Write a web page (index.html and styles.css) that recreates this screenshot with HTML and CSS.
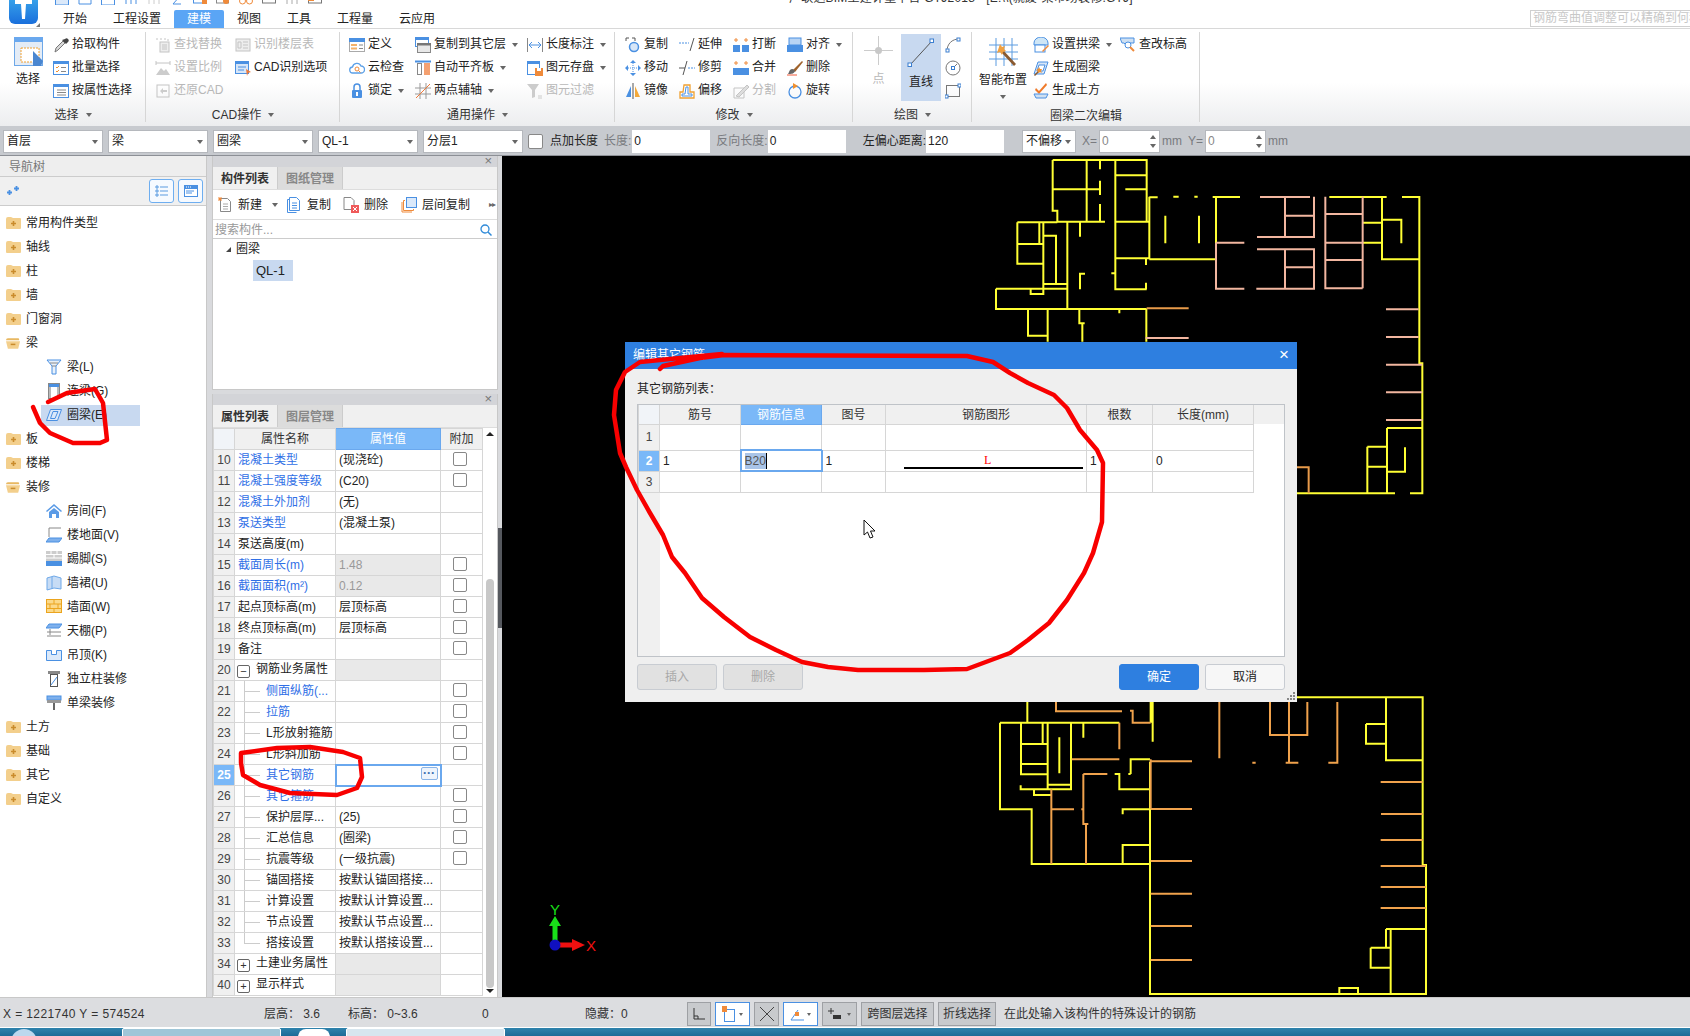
FILE: index.html
```html
<!DOCTYPE html>
<html lang="zh-CN">
<head>
<meta charset="utf-8">
<title>广联达BIM土建计量平台 GTJ2018</title>
<link rel="stylesheet" href="styles.css">
</head>
<body>
<svg class="defs" aria-hidden="true">
  <symbol id="pick" viewBox="0 0 16 16"><path d="M2 15l1-4 7-7 2 2-7 7z" fill="#d8d8d8" stroke="#777"/><path d="M9 3l4 4 2-2a2 2 0 0 0-3-3z" fill="#444"/></symbol>
  <symbol id="wcheck" viewBox="0 0 16 16"><rect x=".5" y="1.5" width="15" height="13" fill="#fff" stroke="#4a90e2"/><rect y="1" width="16" height="3" fill="#4a90e2"/><path d="M3 7l1 1 2-2M3 11l1 1 2-2" stroke="#f09030" fill="none"/><path d="M8 7.5h5M8 11.5h5" stroke="#888"/></symbol>
  <symbol id="wlist" viewBox="0 0 16 16"><rect x=".5" y="1.5" width="15" height="13" fill="#fff" stroke="#4a90e2"/><rect y="1" width="16" height="3" fill="#4a90e2"/><path d="M4 7h9M4 9.5h9M4 12h9" stroke="#888"/></symbol>
  <symbol id="gfind" viewBox="0 0 16 16"><rect x="5" y="5" width="9" height="10" fill="#eee" stroke="#c4c4c4"/><path d="M1 2h2M5 2h2M9 2h2M13 2v2M7 8h5M7 10h5M7 12h5" stroke="#c4c4c4"/></symbol>
  <symbol id="gfloor" viewBox="0 0 16 16"><rect x="1" y="2" width="14" height="12" fill="#eee" stroke="#c4c4c4"/><path d="M8 5h5M8 8h5M8 11h5M3 5h3v6H3z" stroke="#c4c4c4" fill="none"/></symbol>
  <symbol id="gscale" viewBox="0 0 16 16"><path d="M1 3h14M1 1v4M15 1v4" stroke="#c4c4c4" fill="none"/><path d="M1 15l5-7 3 3 2-2 4 6z" fill="#ccc"/></symbol>
  <symbol id="cadopt" viewBox="0 0 16 16"><rect x=".5" y="1.5" width="13" height="12" fill="#d7e6f8" stroke="#4a90e2"/><rect y="1" width="14" height="3" fill="#4a90e2"/><path d="M3 7h8M3 10h6" stroke="#4a90e2"/><path d="M11 9l5 3-3 1-1 3z" fill="#ef7a3a"/></symbol>
  <symbol id="grestore" viewBox="0 0 16 16"><rect x="2" y="2" width="12" height="12" fill="none" stroke="#c4c4c4"/><path d="M5 8l3-3v2h4v2H8v2z" fill="#ccc"/></symbol>
  <symbol id="define" viewBox="0 0 16 16"><rect x=".5" y="1.5" width="15" height="13" fill="#fff" stroke="#aaa"/><rect y="1" width="16" height="4" fill="#4a90e2"/><rect x="2" y="7" width="6" height="2" fill="#f4b26a"/><rect x="2" y="10.500" width="6" height="2" fill="#f4b26a"/><path d="M10 8h4M10 11.500h4" stroke="#888"/></symbol>
  <symbol id="cloud" viewBox="0 0 16 16"><path d="M4 13a3 3 0 0 1-.5-6A4.500 4.500 0 0 1 12 6a3.500 3.500 0 0 1 0 7z" fill="#fff" stroke="#5ba0e8" stroke-width="1.300"/><circle cx="8" cy="9" r="2" fill="none" stroke="#ef8a3a"/><path d="M9.500 10.500l2 2" stroke="#ef8a3a"/></symbol>
  <symbol id="lock" viewBox="0 0 16 16"><path d="M5 7V4a3 3 0 0 1 6 0v3" fill="none" stroke="#4a90e2" stroke-width="1.500"/><rect x="3" y="7" width="10" height="8" rx="1" fill="#4a90e2"/><rect x="7" y="9" width="2" height="4" fill="#fff"/></symbol>
  <symbol id="copyfl" viewBox="0 0 16 16"><rect x=".5" y=".5" width="13" height="9" fill="#fff" stroke="#4a90e2"/><rect width="14" height="3" fill="#4a90e2"/><rect x="2.500" y="6.500" width="13" height="9" fill="#e8e8e8" stroke="#888"/><rect x="2" y="6" width="14" height="2.500" fill="#777"/></symbol>
  <symbol id="autofl" viewBox="0 0 16 16"><path d="M0 1.500h16" stroke="#4a90e2" stroke-width="2"/><rect x="2.500" y="3.500" width="4" height="11" fill="#fff" stroke="#888"/><rect x="9" y="3" width="6" height="12" fill="#f4a070"/></symbol>
  <symbol id="axis" viewBox="0 0 16 16"><path d="M0 5h16M0 11h16M5 0v16M11 0v16" stroke="#999" fill="none"/><path d="M1 15L15 1" stroke="#ef7a3a"/></symbol>
  <symbol id="dimen" viewBox="0 0 16 16"><path d="M.5 1v14M15.500 1v14" stroke="#888"/><path d="M2 8h12M2 8l3-3M2 8l3 3M14 8l-3-3M14 8l-3 3" stroke="#4a90e2" fill="none"/></symbol>
  <symbol id="store" viewBox="0 0 16 16"><rect x=".5" y="1.500" width="12" height="13" fill="#fff" stroke="#4a90e2"/><rect y="1" width="13" height="3" fill="#4a90e2"/><rect x="8" y="8" width="8" height="8" fill="#ef8a3a"/><rect x="10" y="8" width="4" height="3" fill="#fff"/></symbol>
  <symbol id="gfilter" viewBox="0 0 16 16"><path d="M0 1h12L8 7v7L5 15V7z" fill="#ccc"/><path d="M11 13h4M11 15h4" stroke="#ccc"/></symbol>
  <symbol id="mcopy" viewBox="0 0 16 16"><path d="M1 1h3M7 1h3v3M1 1v3" stroke="#555" fill="none"/><circle cx="9" cy="10" r="4.500" fill="#d7e6f8" stroke="#4a90e2" stroke-width="1.500"/></symbol>
  <symbol id="mmove" viewBox="0 0 16 16"><path d="M8 0l3 3H5zM8 16l-3-3h6zM0 8l3-3v6zM16 8l-3 3V5z" fill="#4a90e2"/><path d="M8 3v10M3 8h10" stroke="#4a90e2" stroke-dasharray="1 1"/></symbol>
  <symbol id="mmirror" viewBox="0 0 16 16"><path d="M1 14l5-11v11z" fill="#4a90e2"/><path d="M8 0v16" stroke="#555"/><path d="M10 3l5 11h-5z" fill="#f4a93a"/></symbol>
  <symbol id="mext" viewBox="0 0 16 16"><path d="M0 6h10" stroke="#4a90e2" stroke-dasharray="2 1"/><path d="M11 14l4-13" stroke="#555"/></symbol>
  <symbol id="mtrim" viewBox="0 0 16 16"><path d="M0 8h6" stroke="#555"/><path d="M9 8h7" stroke="#4a90e2" stroke-dasharray="2 1"/><path d="M4 15L8 1" stroke="#555"/></symbol>
  <symbol id="moff" viewBox="0 0 16 16"><path d="M1 15V9h3l1-7h6v7h4v6z" fill="#fff" stroke="#f0a030" stroke-width="1.300"/><path d="M3 13V11h3l1-7h2v7h4v2z" fill="none" stroke="#4a90e2"/></symbol>
  <symbol id="gsplit" viewBox="0 0 16 16"><path d="M1 5h10v10H1z" fill="none" stroke="#c4c4c4"/><path d="M3 13L14 2l2 2L6 14z" fill="#ddd" stroke="#c4c4c4"/></symbol>
  <symbol id="mbreak" viewBox="0 0 16 16"><path d="M3 1v4M13 1v4M1 3h4M11 3h4" stroke="#ef8a3a"/><rect y="8" width="7" height="7" fill="#4a90e2"/><rect x="9" y="8" width="7" height="7" fill="#4a90e2"/></symbol>
  <symbol id="mmerge" viewBox="0 0 16 16"><path d="M3 1v4M13 1v4M1 3h4M11 3h4" stroke="#ef8a3a"/><rect y="8" width="16" height="7" fill="#4a90e2"/></symbol>
  <symbol id="malign" viewBox="0 0 16 16"><rect x="2" y="1" width="12" height="7" fill="#b8d4f4" stroke="#4a90e2"/><rect y="8" width="16" height="7" fill="#4a90e2"/></symbol>
  <symbol id="mdel" viewBox="0 0 16 16"><path d="M6 10L15 1l1 1-8 10z" fill="#a0622a"/><path d="M3 10c2-2 4-1 5 1-1 3-4 3-7 3 1-1 1-3 2-4z" fill="#666"/><path d="M0 15h10" stroke="#ef5a3a"/></symbol>
  <symbol id="mrot" viewBox="0 0 16 16"><circle cx="8" cy="9" r="6" fill="none" stroke="#4a90e2" stroke-width="1.300"/><path d="M6 0l5 3-5 3z" fill="#f09030"/></symbol>
  <symbol id="dpoint" viewBox="0 0 29 29"><path d="M14.500 0v12M14.500 17v12M0 14.500h12M17 14.500h12" stroke="#ccc"/><circle cx="14.500" cy="14.500" r="3.500" fill="#c8c8c8"/></symbol>
  <symbol id="dline" viewBox="0 0 28 30"><path d="M3 27L25 3" stroke="#555"/><rect x="1" y="25" width="3.500" height="3.500" fill="#fff" stroke="#3b7fd0"/><rect x="23" y="1" width="3.500" height="3.500" fill="#fff" stroke="#3b7fd0"/></symbol>
  <symbol id="darc" viewBox="0 0 16 16"><path d="M2 14C2 7 7 2 14 2" fill="none" stroke="#777"/><rect x="1" y="12" width="3" height="3" fill="#fff" stroke="#3b7fd0"/><rect x="12" y="1" width="3" height="3" fill="#fff" stroke="#3b7fd0"/></symbol>
  <symbol id="dcirc" viewBox="0 0 16 16"><circle cx="8" cy="8" r="7" fill="none" stroke="#777"/><path d="M8 8l4-4" stroke="#777"/><rect x="6.500" y="6.500" width="3" height="3" fill="#fff" stroke="#3b7fd0"/></symbol>
  <symbol id="drect" viewBox="0 0 16 16"><rect x="1.500" y="2.500" width="13" height="11" fill="none" stroke="#777"/><rect x="0" y="12" width="3" height="3" fill="#fff" stroke="#3b7fd0"/><rect x="13" y="1" width="3" height="3" fill="#fff" stroke="#3b7fd0"/></symbol>
  <symbol id="smart" viewBox="0 0 31 29"><path d="M1 7h29M1 14h29M1 21h29M8 0v28M16 0v28M24 0v28" stroke="#5a9be0"/><path d="M15 12l13 14-2 2L13 14z" fill="#8a5a30"/><path d="M12 6l2 3 3-1-1 3 2 2-3 1-1 3-2-3-3 1 1-3z" fill="#f0a040"/></symbol>
  <symbol id="arch" viewBox="0 0 16 16"><path d="M1 6a7 6 0 0 1 14 0v2H1z" fill="#cfe6f6" stroke="#4a90e2"/><rect x="2" y="8" width="10" height="7" fill="#fff" stroke="#4a90e2"/><path d="M9 14l6-6 1 1-6 6z" fill="#ef8a3a"/></symbol>
  <symbol id="genring" viewBox="0 0 16 16"><path d="M5 2h10l-4 12H1z" fill="#d7e6f8" stroke="#4a90e2"/><path d="M6 5h6l-2 6H4z" fill="#fff" stroke="#4a90e2"/><path d="M1 15l5-5 1 1-5 5z" fill="#8a5a30"/><path d="M6 7l1 2 2 0-1 2 1 2-2-1-2 1 0-2-2-1 2-1z" fill="#f09030"/></symbol>
  <symbol id="genearth" viewBox="0 0 16 16"><path d="M3 5l3 3 7-8 1 2-8 9-4-4z" fill="#ef7a2a"/><path d="M1 11h14l-2 4H3z" fill="#cfe0f2" stroke="#4a90e2"/></symbol>
  <symbol id="chk" viewBox="0 0 16 16"><path d="M0 1h14v5H8v4L4 6H2z" fill="#cfe0f2" stroke="#4a90e2"/><circle cx="8" cy="8" r="3" fill="#fff" stroke="#4a90e2"/><path d="M10 10l4 4" stroke="#ef8a3a" stroke-width="2"/></symbol>
  <symbol id="fold" viewBox="0 0 15 12"><path d="M0 2q0-2 2-2h3l2 1h7q1 0 1 1v9q0 1-1 1H1q-1 0-1-1z" fill="#f3cf8c"/><path d="M7.500 4v5M5 6.500h5" stroke="#c98b2c" stroke-width="1.600"/></symbol>
  <symbol id="foldo" viewBox="0 0 16 12"><path d="M0 3q0-2 2-2h11q1 0 1 1v1H3z" fill="#e8b862"/><path d="M0 4h15l-2 8H2z" fill="#f3cf8c"/><path d="M5 7.500h5" stroke="#c98b2c" stroke-width="1.600"/></symbol>
  <symbol id="n1" viewBox="0 0 16 16"><path d="M1 1h14l-5 6v8H6V7z" fill="#e8f1fb" stroke="#4a90e2"/><path d="M4 4h8M6 7h4" stroke="#888"/></symbol>
  <symbol id="n2" viewBox="0 0 16 16"><rect x="2.500" y=".5" width="11" height="15" fill="#fff" stroke="#888"/><rect x="3" y="1" width="10" height="3" fill="#4a90e2"/><path d="M4 4v12M12 4v12" stroke="#777"/></symbol>
  <symbol id="n3" viewBox="0 0 16 16"><path d="M4.500 2.500h11l-4 11h-11z" fill="#dbe9fa" stroke="#4a90e2"/><path d="M7 4.500h5l-3 7H4.500z" fill="none" stroke="#4a90e2"/></symbol>
  <symbol id="nhouse" viewBox="0 0 16 16"><path d="M8 1L0 8l1 1 7-6 7 6 1-1z" fill="#5b9be6"/><path d="M3 9l5-4 5 4v6h-3v-4H6v4H3z" fill="#5b9be6"/></symbol>
  <symbol id="nfloor" viewBox="0 0 16 16"><path d="M3 10V1h12" fill="none" stroke="#888"/><path d="M3 11h13l-3 4H0z" fill="#7eb0ec" stroke="#4a90e2"/></symbol>
  <symbol id="nskirt" viewBox="0 0 16 16"><rect width="16" height="11" fill="#ccc"/><path d="M0 3.500h16M0 7h16M5 0v3.500M11 0v3.500M8 3.500V7" stroke="#fff"/><rect y="10" width="16" height="5" fill="#4a90e2"/></symbol>
  <symbol id="nwains" viewBox="0 0 16 16"><path d="M1 3l7-2 7 2v11l-7-1-7 2z" fill="#c7dcf5" stroke="#6ea8e8"/><path d="M6 2v12" stroke="#6ea8e8"/></symbol>
  <symbol id="nwall" viewBox="0 0 16 16"><rect x=".5" y=".5" width="15" height="13" fill="#fbd98a" stroke="#eba41e"/><path d="M0 5h16M0 9.500h16M8 0v5M4 5v4.500M12 5v4.500M8 9.500V14" stroke="#eba41e"/></symbol>
  <symbol id="nceil" viewBox="0 0 16 16"><path d="M3 1h13l-3 4H0z" fill="#7eb0ec" stroke="#4a90e2"/><path d="M4 6v6M1 9h14M1 13h14" stroke="#888" fill="none"/></symbol>
  <symbol id="nhang" viewBox="0 0 16 16"><path d="M.5 3.500h5v4h5v-4h5v10H.5z" fill="#dbe9fa" stroke="#4a90e2"/></symbol>
  <symbol id="npillar" viewBox="0 0 16 16"><rect x="2" y="0" width="12" height="3" fill="#888"/><rect x="4.500" y="3.500" width="7" height="12" fill="#fff" stroke="#555"/><path d="M5 14l6-8" stroke="#4a90e2"/></symbol>
  <symbol id="nroll" viewBox="0 0 16 16"><rect x="1" y="1" width="14" height="4" fill="#7eb0ec" stroke="#4a90e2"/><rect x="1" y="5" width="14" height="3" fill="#999"/><path d="M8 8v7" stroke="#666" stroke-width="2"/></symbol>
  <symbol id="tnew" viewBox="0 0 14 16"><path d="M2.500 1.500h7l3 3v10h-10z" fill="#fff" stroke="#888"/><path d="M5 7h5M5 9.500h5M5 12h5" stroke="#aaa"/><path d="M2 0v4M0 2h4M.5.500l3 3M3.500.500l-3 3" stroke="#ef8a3a"/></symbol>
  <symbol id="tcopy" viewBox="0 0 14 16"><path d="M.5 2.500h2M.5 2.500v13h9" fill="none" stroke="#4a90e2"/><path d="M2.500 .5h7l3 3v10h-10z" fill="#fff" stroke="#4a90e2"/><path d="M5 6h5M5 8.500h5M5 11h5" stroke="#4a90e2"/></symbol>
  <symbol id="tdel" viewBox="0 0 16 16"><path d="M1 .5h7l3 3v9H1z" fill="#fff" stroke="#888"/><rect x="8" y="8" width="8" height="8" fill="#ef5a5a"/><path d="M10 10l4 4M14 10l-4 4" stroke="#fff"/></symbol>
  <symbol id="tfl" viewBox="0 0 16 16"><rect x="5.500" y=".5" width="10" height="10" fill="#dbe9fa" stroke="#4a90e2"/><path d="M4 3.500H2.500v10h10V12M1 5v10h10" fill="none" stroke="#ef8a3a"/></symbol>
  <symbol id="search" viewBox="0 0 12 12"><circle cx="5" cy="5" r="4" fill="none" stroke="#2f8ad8" stroke-width="1.300"/><path d="M8 8l3.500 3.500" stroke="#2f8ad8" stroke-width="1.500"/></symbol>
  <symbol id="navlist" viewBox="0 0 14 14"><path d="M1 2h2v2H1zM1 6h2v2H1zM1 10h2v2H1z" fill="none" stroke="#5a9be0"/><path d="M5 3h8M5 7h8M5 11h8" stroke="#5a9be0"/></symbol>
  <symbol id="navwin" viewBox="0 0 14 14"><rect x=".5" y="1.500" width="13" height="11" fill="#fff" stroke="#4a90e2"/><rect y="1" width="14" height="4" fill="#4a90e2"/><path d="M2 3h1M4 3h1M6 3h1" stroke="#fff"/><path d="M2 7h8M2 9h6" stroke="#4a90e2"/></symbol>
  <symbol id="plus2" viewBox="0 0 12 10"><path d="M7 2.500h5M9.500 0v5" stroke="#4a90e2" stroke-width="1.800"/><path d="M0 6.500h5M2.500 4v5" stroke="#4a90e2" stroke-width="1.800"/></symbol>
</svg>

<header class="topbar">
  <div class="logo">
    <svg width="46" height="28" viewBox="0 0 46 28"><defs><linearGradient id="lg" x1="0" y1="0" x2="0" y2="1"><stop offset="0" stop-color="#3fb0ee"/><stop offset="1" stop-color="#1a6fdc"/></linearGradient></defs><rect x="9" y="-8" width="29" height="32" rx="6" fill="url(#lg)"/><path d="M15 0h17v4h-6l-1 15h-3l-1-15h-6z" fill="#fff"/><path d="M40 23v4h-4z" fill="#777"/></svg>
  </div>
  <div class="topright">
    <div class="qat">
      <svg class="q"><rect x=".5" y="1" width="13" height="13" fill="#dbe9fa" stroke="#4a90e2"/></svg>
      <svg class="q"><path d="M1 1v12h12V6l-5-5z" fill="none" stroke="#4a90e2"/></svg>
      <svg class="q"><rect x=".5" y="1" width="13" height="13" fill="none" stroke="#4a90e2"/></svg>
      <svg class="q"><path d="M2 0v13M7 0v13M12 0v13" stroke="#4a90e2"/></svg>
      <svg class="q"><path d="M2 0v13M7 0v13M12 0v13" stroke="#ccc"/></svg>
      <svg class="q"><path d="M3 4h8l-8 9h8" fill="none" stroke="#4a90e2"/></svg>
      <svg class="q"><rect x=".5" y="1" width="12" height="11" fill="#fff" stroke="#4a90e2"/><rect x="9" y="8" width="5" height="5" fill="#ef8a3a"/></svg>
      <svg class="q"><rect x=".5" y="1" width="12" height="11" fill="#fff" stroke="#888"/><circle cx="10" cy="10" r="3" fill="#ef8a3a"/></svg>
      <svg class="q"><circle cx="3.500" cy="10" r="3" fill="none" stroke="#ef8a3a"/><circle cx="10.500" cy="10" r="3" fill="none" stroke="#ef8a3a"/></svg>
      <svg class="q"><rect x=".5" y="1" width="13" height="11" fill="#fff" stroke="#777"/></svg>
      <svg class="q"><path d="M2 0v13M7 0v13M12 0v13" stroke="#aaa"/></svg>
      <svg class="q"><rect x=".5" y="1" width="13" height="11" fill="#fff" stroke="#777"/><rect y="4" width="6" height="6" fill="#ef8a3a"/></svg>
    </div>
    <div class="apptitle">广联达BIM土建计量平台 GTJ2018 - [E:\\(就废·某市场装修.GTJ]</div>
    <nav class="tabs">
      <span class="tab">开始</span><span class="tab">工程设置</span><span class="tab on">建模</span><span class="tab">视图</span><span class="tab">工具</span><span class="tab">工程量</span><span class="tab">云应用</span>
      <span class="helpbox">钢筋弯曲值调整可以精确到何种程度</span>
    </nav>
  </div>
</header>

<section class="ribbon">
  <div class="group g1">
    <div class="gbody">
      <div class="big b1"><svg width="29" height="29" viewBox="0 0 29 29"><rect x=".5" y=".5" width="28" height="28" fill="#e4ecf6" stroke="#6ea8e8"/><rect width="29" height="5" fill="#6aa8ee"/><rect x="7" y="11" width="18" height="14" fill="#fff" stroke="#f0a030" stroke-dasharray="2 1"/><path d="M19 14l10 10-2 5h-8z" fill="#4a86d0"/></svg><span class="biglbl">选择</span></div>
      <div class="col">
        <div class="it"><svg class="ic"><use href="#pick"/></svg>拾取构件</div>
        <div class="it"><svg class="ic"><use href="#wcheck"/></svg>批量选择</div>
        <div class="it"><svg class="ic"><use href="#wlist"/></svg>按属性选择</div>
      </div>
    </div>
    <div class="glabel">选择<i class="dd"></i></div>
  </div>
  <div class="group g2">
    <div class="gbody">
      <div class="col c80">
        <div class="it off"><svg class="ic"><use href="#gfind"/></svg>查找替换</div>
        <div class="it off"><svg class="ic"><use href="#gscale"/></svg>设置比例</div>
        <div class="it off"><svg class="ic"><use href="#grestore"/></svg>还原CAD</div>
      </div>
      <div class="col">
        <div class="it off"><svg class="ic"><use href="#gfloor"/></svg>识别楼层表</div>
        <div class="it"><svg class="ic"><use href="#cadopt"/></svg>CAD识别选项</div>
      </div>
    </div>
    <div class="glabel">CAD操作<i class="dd"></i></div>
  </div>
  <div class="group g3">
    <div class="gbody">
      <div class="col c66">
        <div class="it"><svg class="ic"><use href="#define"/></svg>定义</div>
        <div class="it"><svg class="ic"><use href="#cloud"/></svg>云检查</div>
        <div class="it"><svg class="ic"><use href="#lock"/></svg>锁定<i class="dd"></i></div>
      </div>
      <div class="col c112">
        <div class="it"><svg class="ic"><use href="#copyfl"/></svg>复制到其它层<i class="dd"></i></div>
        <div class="it"><svg class="ic"><use href="#autofl"/></svg>自动平齐板<i class="dd"></i></div>
        <div class="it"><svg class="ic"><use href="#axis"/></svg>两点辅轴<i class="dd"></i></div>
      </div>
      <div class="col">
        <div class="it"><svg class="ic"><use href="#dimen"/></svg>长度标注<i class="dd"></i></div>
        <div class="it"><svg class="ic"><use href="#store"/></svg>图元存盘<i class="dd"></i></div>
        <div class="it off"><svg class="ic"><use href="#gfilter"/></svg>图元过滤</div>
      </div>
    </div>
    <div class="glabel">通用操作<i class="dd"></i></div>
  </div>
  <div class="group g4">
    <div class="gbody">
      <div class="col c54">
        <div class="it"><svg class="ic"><use href="#mcopy"/></svg>复制</div>
        <div class="it"><svg class="ic"><use href="#mmove"/></svg>移动</div>
        <div class="it"><svg class="ic"><use href="#mmirror"/></svg>镜像</div>
      </div>
      <div class="col c54">
        <div class="it"><svg class="ic"><use href="#mext"/></svg>延伸</div>
        <div class="it"><svg class="ic"><use href="#mtrim"/></svg>修剪</div>
        <div class="it"><svg class="ic"><use href="#moff"/></svg>偏移</div>
      </div>
      <div class="col c54">
        <div class="it"><svg class="ic"><use href="#mbreak"/></svg>打断</div>
        <div class="it"><svg class="ic"><use href="#mmerge"/></svg>合并</div>
        <div class="it off"><svg class="ic"><use href="#gsplit"/></svg>分割</div>
      </div>
      <div class="col">
        <div class="it"><svg class="ic"><use href="#malign"/></svg>对齐<i class="dd"></i></div>
        <div class="it"><svg class="ic"><use href="#mdel"/></svg>删除</div>
        <div class="it"><svg class="ic"><use href="#mrot"/></svg>旋转</div>
      </div>
    </div>
    <div class="glabel">修改<i class="dd"></i></div>
  </div>
  <div class="group g5">
    <div class="gbody">
      <div class="big b2"><svg width="29" height="29"><use href="#dpoint"/></svg><span class="biglbl offt">点</span></div>
      <div class="big b3"><svg width="28" height="30"><use href="#dline"/></svg><span class="biglbl">直线</span></div>
      <div class="col">
        <div class="it"><svg class="ic"><use href="#darc"/></svg></div>
        <div class="it"><svg class="ic"><use href="#dcirc"/></svg></div>
        <div class="it"><svg class="ic"><use href="#drect"/></svg></div>
      </div>
    </div>
    <div class="glabel">绘图<i class="dd"></i></div>
  </div>
  <div class="group g6">
    <div class="gbody">
      <div class="big b4"><svg width="31" height="29"><use href="#smart"/></svg><span class="biglbl">智能布置</span><i class="dd"></i></div>
      <div class="col c87">
        <div class="it"><svg class="ic"><use href="#arch"/></svg>设置拱梁<i class="dd"></i></div>
        <div class="it"><svg class="ic"><use href="#genring"/></svg>生成圈梁</div>
        <div class="it"><svg class="ic"><use href="#genearth"/></svg>生成土方</div>
      </div>
      <div class="col">
        <div class="it"><svg class="ic"><use href="#chk"/></svg>查改标高</div>
      </div>
    </div>
    <div class="glabel">圈梁二次编辑</div>
  </div>
</section>

<section class="optbar">
  <span class="sel">首层</span>
  <span class="sel">梁</span>
  <span class="sel">圈梁</span>
  <span class="sel">QL-1</span>
  <span class="sel">分层1</span>
  <span class="cbx"></span>
  <span class="lbl ml7">点加长度</span>
  <span class="lbl ml6 dim">长度:</span><span class="inp w78 gapl">0</span>
  <span class="lbl ml6 dim">反向长度:</span><span class="inp w78">0</span>
  <span class="lbl ml17">左偏心距离:</span><span class="inp w78">120</span>
  <span class="sel short">不偏移</span>
  <span class="lbl ml6 dim">X=</span><span class="inp spin w61 dim gapl2">0</span>
  <span class="lbl dim gapl1">mm</span>
  <span class="lbl ml6 dim">Y=</span><span class="inp spin w61 dim gapl2">0</span>
  <span class="lbl dim gapl1">mm</span>
</section>

<main class="work">
  <aside class="nav">
    <div class="navhead">导航树</div>
    <div class="navtool">
      <svg class="plus" width="12" height="10"><use href="#plus2"/></svg>
      <span class="navbtn"><svg width="14" height="14"><use href="#navlist"/></svg></span>
      <span class="navbtn"><svg width="14" height="14"><use href="#navwin"/></svg></span>
    </div>
    <ul class="tree">
      <li><svg class="fo"><use href="#fold"/></svg>常用构件类型</li>
      <li><svg class="fo"><use href="#fold"/></svg>轴线</li>
      <li><svg class="fo"><use href="#fold"/></svg>柱</li>
      <li><svg class="fo"><use href="#fold"/></svg>墙</li>
      <li><svg class="fo"><use href="#fold"/></svg>门窗洞</li>
      <li><svg class="fo"><use href="#foldo"/></svg>梁</li>
      <li class="sub"><span><svg class="ic"><use href="#n1"/></svg>梁(L)</span></li>
      <li class="sub"><span><svg class="ic"><use href="#n2"/></svg>连梁(G)</span></li>
      <li class="sub cur"><span><svg class="ic"><use href="#n3"/></svg>圈梁(E)</span></li>
      <li><svg class="fo"><use href="#fold"/></svg>板</li>
      <li><svg class="fo"><use href="#fold"/></svg>楼梯</li>
      <li><svg class="fo"><use href="#foldo"/></svg>装修</li>
      <li class="sub"><span><svg class="ic"><use href="#nhouse"/></svg>房间(F)</span></li>
      <li class="sub"><span><svg class="ic"><use href="#nfloor"/></svg>楼地面(V)</span></li>
      <li class="sub"><span><svg class="ic"><use href="#nskirt"/></svg>踢脚(S)</span></li>
      <li class="sub"><span><svg class="ic"><use href="#nwains"/></svg>墙裙(U)</span></li>
      <li class="sub"><span><svg class="ic"><use href="#nwall"/></svg>墙面(W)</span></li>
      <li class="sub"><span><svg class="ic"><use href="#nceil"/></svg>天棚(P)</span></li>
      <li class="sub"><span><svg class="ic"><use href="#nhang"/></svg>吊顶(K)</span></li>
      <li class="sub"><span><svg class="ic"><use href="#npillar"/></svg>独立柱装修</span></li>
      <li class="sub"><span><svg class="ic"><use href="#nroll"/></svg>单梁装修</span></li>
      <li><svg class="fo"><use href="#fold"/></svg>土方</li>
      <li><svg class="fo"><use href="#fold"/></svg>基础</li>
      <li><svg class="fo"><use href="#fold"/></svg>其它</li>
      <li><svg class="fo"><use href="#fold"/></svg>自定义</li>
    </ul>
  </aside>

  <div class="panels">
    <section class="panel p1">
      <div class="phead">×</div>
      <div class="ptabs"><span class="ptab on">构件列表</span><span class="ptab">图纸管理</span></div>
      <div class="ptool">
        <span class="pt t1"><svg class="ic"><use href="#tnew"/></svg>新建<i class="dd"></i></span>
        <span class="pt t2"><svg class="ic"><use href="#tcopy"/></svg>复制</span>
        <span class="pt t3"><svg class="ic"><use href="#tdel"/></svg>删除</span>
        <span class="pt t4"><svg class="ic"><use href="#tfl"/></svg>层间复制</span>
        <span class="more">▸▸</span>
      </div>
      <div class="psearch"><span>搜索构件...</span><svg width="12" height="12"><use href="#search"/></svg></div>
      <div class="ptree">
        <div class="node"><i class="tri"></i>圈梁</div>
        <div class="leaf"><span>QL-1</span></div>
      </div>
    </section>

    <section class="panel p2">
      <div class="phead">×</div>
      <div class="ptabs"><span class="ptab on">属性列表</span><span class="ptab">图层管理</span></div>
      <div class="propwrap">
        <table class="props">
          <colgroup><col class="c-n"><col class="c-name"><col class="c-val"><col class="c-add"></colgroup>
          <thead><tr><th class="blank"></th><th>属性名称</th><th class="hl">属性值</th><th>附加</th></tr></thead>
          <tbody>
            <tr><td class="n">10</td><td class="lk">混凝土类型</td><td>(现浇砼)</td><td class="a"><i class="cb"></i></td></tr>
            <tr><td class="n">11</td><td class="lk">混凝土强度等级</td><td>(C20)</td><td class="a"><i class="cb"></i></td></tr>
            <tr><td class="n">12</td><td class="lk">混凝土外加剂</td><td>(无)</td><td class="a"></td></tr>
            <tr><td class="n">13</td><td class="lk">泵送类型</td><td>(混凝土泵)</td><td class="a"></td></tr>
            <tr><td class="n">14</td><td>泵送高度(m)</td><td></td><td class="a"></td></tr>
            <tr><td class="n">15</td><td class="lk">截面周长(m)</td><td class="ro">1.48</td><td class="a"><i class="cb"></i></td></tr>
            <tr><td class="n">16</td><td class="lk">截面面积(m²)</td><td class="ro">0.12</td><td class="a"><i class="cb"></i></td></tr>
            <tr><td class="n">17</td><td>起点顶标高(m)</td><td>层顶标高</td><td class="a"><i class="cb"></i></td></tr>
            <tr><td class="n">18</td><td>终点顶标高(m)</td><td>层顶标高</td><td class="a"><i class="cb"></i></td></tr>
            <tr><td class="n">19</td><td>备注</td><td></td><td class="a"><i class="cb"></i></td></tr>
            <tr><td class="n">20</td><td class="grp"><i class="box">−</i>钢筋业务属性</td><td class="ro"></td><td class="a"></td></tr>
            <tr><td class="n">21</td><td class="ind lk">侧面纵筋(...</td><td></td><td class="a"><i class="cb"></i></td></tr>
            <tr><td class="n">22</td><td class="ind lk">拉筋</td><td></td><td class="a"><i class="cb"></i></td></tr>
            <tr><td class="n">23</td><td class="ind">L形放射箍筋</td><td></td><td class="a"><i class="cb"></i></td></tr>
            <tr><td class="n">24</td><td class="ind">L形斜加筋</td><td></td><td class="a"><i class="cb"></i></td></tr>
            <tr class="act"><td class="n">25</td><td class="ind lk">其它钢筋</td><td class="edit"><span class="dots">···</span></td><td class="a"></td></tr>
            <tr><td class="n">26</td><td class="ind lk">其它箍筋</td><td></td><td class="a"><i class="cb"></i></td></tr>
            <tr><td class="n">27</td><td class="ind">保护层厚...</td><td>(25)</td><td class="a"><i class="cb"></i></td></tr>
            <tr><td class="n">28</td><td class="ind">汇总信息</td><td>(圈梁)</td><td class="a"><i class="cb"></i></td></tr>
            <tr><td class="n">29</td><td class="ind">抗震等级</td><td>(一级抗震)</td><td class="a"><i class="cb"></i></td></tr>
            <tr><td class="n">30</td><td class="ind">锚固搭接</td><td>按默认锚固搭接...</td><td class="a"></td></tr>
            <tr><td class="n">31</td><td class="ind">计算设置</td><td>按默认计算设置...</td><td class="a"></td></tr>
            <tr><td class="n">32</td><td class="ind">节点设置</td><td>按默认节点设置...</td><td class="a"></td></tr>
            <tr><td class="n">33</td><td class="ind last">搭接设置</td><td>按默认搭接设置...</td><td class="a"></td></tr>
            <tr><td class="n">34</td><td class="grp"><i class="box">+</i>土建业务属性</td><td class="ro"></td><td class="a"></td></tr>
            <tr><td class="n">40</td><td class="grp"><i class="box">+</i>显示样式</td><td class="ro"></td><td class="a"></td></tr>
          </tbody>
        </table>
        <div class="vscroll"><i class="up"></i><b></b><i class="down"></i></div>
      </div>
    </section>
  </div>

  <div class="split"><b></b></div>

  <div class="canvas">
    <svg class="plan" width="1188" height="841" viewBox="502 156 1188 841">
      <g transform="translate(980 150) scale(.33333)" fill="none" stroke-width="6">
        <path stroke="#ffff33" d="M218,30H500V215M218,30V182H232V215H375M320,30V215M218,118H358M360,30V58M360,92V135M360,162V215M406,30V418H500M406,76H500M436,118H500M406,215H506M406,325H506M498,328V345M498,398V418M508,328V140M508,142H533M580,140H596M643,140H653M698,141H780M508,328H708V141M556,197V280M657,197V280M112,217H232M112,217V341H190M112,282H190M178,217V280M190,217V416M262,217V477M192,257H228V402M190,402H262M190,416H262M48,416H190M48,416V477H500M152,418V432H190V416M300,217V260M315,371H300V418M394,370H406M144,477V557H203M203,477V575M298,477V520H314M307,520V575M418,477V490M499,477V575"/>
        <path stroke="#ffff33" d="M1048,141H1220M1266,141H1318V640H1327V1030H1290M1206,141V328H1318M1148,218H1206M1148,278H1206M1208,209H1264V280M1221,834H1327M1221,834V1030M1162,890H1221M1162,890V1030M1162,950H1221M1221,965H1275V892M950,1030H1245"/>
        <path stroke="#f2b6a0" d="M708,278H793M708,278V416H793M840,141H990M915,141V262M831,261H1002V140M915,197H1000M831,298H1002V416H829M915,298V416M915,352H1000M1036,140V415H1148M1036,192H1148M1036,278H1148M1036,330H1148M1148,140V415M497,564H626M1218,478H1316M1218,561H1316M1218,644H1327M1218,727H1327M1218,810H1327"/>
        <path stroke="#e79a4a" d="M500,475H626M950,952H986V1030"/>
      </g>
      <g transform="translate(980 690) scale(.33333)" fill="none" stroke-width="6">
        <path stroke="#ffff33" d="M950,22H1328V525H1338V912H510V215M1218,22V211H1328M1158,102H1216M1158,102V161H1216M1218,717H1338M1218,717V773M1232,717V912M1172,773H1232M1172,773V833H1232M1078,912V894H1134V912M142,36V98M60,98H418M60,98V358H155V522H510M123,98V253H202M123,162H202M123,222H202M188,100V162M203,98V298M273,98V298H122V286M203,284H273M238,142V250M310,98V143M162,298V315H215M404,252H418V298H512M518,36V155M512,36V98M452,252V208H510M445,252H452M428,373V358H510M428,522V465H510"/>
        <path stroke="#f0a24c" d="M1202,276H1328M1203,372H1328M1202,450H1328M1202,528H1338M1202,591H1338M1202,654H1338M512,214H636M512,357H636M512,513H636M512,611H636M512,708H636M512,810H636M718,36V205M870,36V135H982V36M927,36V218M917,218H955M817,218H827M1045,218H1072V36M418,98V178M275,208H418M228,36V64H426M450,62H458V98H512M214,298V522M215,358H282M304,358H310M310,252H382M310,252V402H325M318,402V522M512,208V357"/>
      </g>
      <g class="axes">
        <path d="M555 945V925" stroke="#19e019" stroke-width="5"/><path d="M555 916l-6 10h12z" fill="#19e019"/>
        <path d="M555 945H572" stroke="#f01010" stroke-width="5"/><path d="M585 945l-13-6v12z" fill="#f01010"/>
        <circle cx="555" cy="945" r="5.500" fill="#1010c0"/>
        <text x="555" y="915" fill="#19e019" font-size="15" text-anchor="middle" font-family="Liberation Sans">Y</text>
        <text x="586" y="951" fill="#f01010" font-size="15" font-family="Liberation Sans">X</text>
      </g>
    </svg>

    <div class="dialog">
      <div class="dtitle"><span>编辑其它钢筋</span><b>×</b></div>
      <div class="dlabel">其它钢筋列表：</div>
      <div class="dgrid">
        <table class="rebar">
          <colgroup><col class="r0"><col class="r1"><col class="r2"><col class="r3"><col class="r4"><col class="r5"><col class="r6"></colgroup>
          <thead><tr><th class="corner"></th><th>筋号</th><th class="hl">钢筋信息</th><th>图号</th><th>钢筋图形</th><th>根数</th><th>长度(mm)</th></tr></thead>
          <tbody>
            <tr class="tall"><td class="n">1</td><td></td><td></td><td></td><td></td><td></td><td></td></tr>
            <tr><td class="n on">2</td><td>1</td><td class="edit"><span class="seltext">B20</span><i class="caret"></i></td><td>1</td><td class="shape"><span class="ell">L</span><i class="bar"></i></td><td>1</td><td>0</td></tr>
            <tr><td class="n">3</td><td></td><td></td><td></td><td></td><td></td><td></td></tr>
          </tbody>
        </table>
      </div>
      <div class="dbtns">
        <span class="btn dis">插入</span>
        <span class="btn dis">删除</span>
        <span class="spacer"></span>
        <span class="btn pri">确定</span>
        <span class="btn">取消</span>
      </div>
      <svg class="grip" width="8" height="8"><path d="M6 0h2v2H6zM3 3h2v2H3zM6 3h2v2H6zM0 6h2v2H0zM3 6h2v2H3zM6 6h2v2H6z" fill="#888"/></svg>
      <svg class="cursor" width="13" height="20" viewBox="0 0 13 20"><path d="M1 1v15l3.500-3 2.500 6 3-1-2.500-6H12z" fill="#fff" stroke="#111"/></svg>
    </div>
  </div>
</main>

<footer class="status">
  <span class="s-xy">X = 1221740 Y = 574524</span>
  <span class="s-h">层高： 3.6</span>
  <span class="s-e">标高： 0~3.6</span>
  <span class="s-z">0</span>
  <span class="s-hide">隐藏：0</span>
  <span class="sb w24"><svg width="14" height="14"><path d="M2 1v11h11M2 9h4v3" fill="none" stroke="#333"/></svg></span>
  <span class="sb w35 act"><svg width="14" height="16"><rect x="2.500" y="3.500" width="10" height="12" fill="#fff" stroke="#4a90e2"/><rect y="0" width="5" height="6" fill="#ef8a3a"/></svg><i class="dd"></i></span>
  <span class="sb w25"><svg width="16" height="16"><path d="M1 1l14 14M15 1L1 15" stroke="#444"/></svg></span>
  <span class="sb w35 act"><svg width="14" height="16"><path d="M1 14h13M1 14L8 4" stroke="#4a90e2"/><rect x="5" y="6" width="4" height="4" fill="#ef8a3a"/></svg><i class="dd"></i></span>
  <span class="sb w35"><svg width="16" height="14"><path d="M3 1v6M0 4h6" stroke="#333"/><rect x="5" y="8" width="8" height="4" fill="#333"/></svg><i class="dd"></i></span>
  <span class="sb w73">跨图层选择</span>
  <span class="sb w58">折线选择</span>
  <span class="s-msg">在此处输入该构件的特殊设计的钢筋</span>
</footer>
<div class="taskbar"><i class="orb"></i><i class="tb1"></i><i class="tb2"></i><i class="tb3"></i></div>

<svg class="ink" width="1690" height="1036" viewBox="0 0 1690 1036">
  <path d="M660,369L663,366L700,358L724,355L967,356L993,362L1010,373L1028,383L1054,395L1067,408L1080,430L1097,450L1103,463L1102,522L1093,553L1084,573L1067,600L1049,623L1028,640L1010,653L967,669L924,670L858,670L828,667L802,662L776,650L750,637L724,617L702,598L685,573L672,557L663,535L650,513L637,490L626,467L620,453L614,415L616,390L625,372L640,362L680,358L722,354"/>
  <path d="M48,402L67,393L95,389L103,403L107,440L100,443L73,443L50,433L40,423L33,407"/>
  <path d="M241,753L277,748L310,747L343,752L360,758L362,777L357,788L337,795L290,793L260,785L243,775L241,763Z"/>
</svg>
</body>
</html>
```
FILE: styles.css
```css
* { box-sizing: border-box; }
html, body { margin: 0; padding: 0; }
body {
  width: 1690px; height: 1036px; overflow: hidden; position: relative;
  font: 12px/1.2 "Liberation Sans", "Noto Sans CJK SC", sans-serif;
  color: #222; background: #fff;
}
.defs { position: absolute; width: 0; height: 0; }
i { font-style: normal; }
.ic { width: 16px; height: 16px; flex: none; }

/* top bar */
.topbar { display: flex; height: 29px; border-bottom: 1px solid #d8d8d8; background: #fff; }
.logo { width: 46px; flex: none; height: 28px; }
.logo svg { display: block; }
.topright { flex: 1; position: relative; display: flex; flex-direction: column; min-width: 0; }
.qat { height: 10px; overflow: hidden; display: flex; gap: 9px; padding-left: 9px; }
.q { width: 14px; height: 14px; margin-top: -9px; flex: none; }
.apptitle { position: absolute; left: 743px; top: -9px; font-size: 12px; letter-spacing: .2px; color: #333; white-space: nowrap; }
.tabs { flex: 1; display: flex; align-items: stretch; padding-left: 4px; }
.tab { padding: 0 13px; line-height: 18px; color: #222; }
.tab.on { background: #5aa5f5; color: #fff; border-radius: 2px 2px 0 0; }
.helpbox {
  margin-left: auto; width: 160px; height: 17px; border: 1px solid #d0d0d0; border-right: 0;
  padding-left: 2px; color: #c8c8c8; overflow: hidden; white-space: nowrap; line-height: 15px;
}

/* ribbon */
.ribbon { display: flex; height: 97px; background: linear-gradient(#fff 0, #fff 55%, #ecedef 100%); }
.group { flex: none; position: relative; display: flex; flex-direction: column; }
.group::after { content: ""; position: absolute; right: 0; top: 3px; bottom: 4px; width: 1px; background: #d6d6d6; }
.gbody { display: flex; height: 73px; padding-top: 4px; }
.glabel { height: 24px; display: flex; align-items: center; justify-content: center; color: #333; padding-top: 2px; }
.g1 { width: 146px; } .g2 { width: 194px; } .g3 { width: 275px; } .g4 { width: 238px; } .g5 { width: 119px; } .g6 { width: 228px; }
.g6 .glabel { padding-top: 5px; }
.g2 .gbody { padding-left: 9px; }
.g3 .gbody { padding-left: 9px; }
.g4 .gbody { padding-left: 10px; }
.g5 .gbody { padding-left: 8px; }
.g6 .gbody { padding-left: 7px; }
.col { display: flex; flex-direction: column; flex: none; }
.c80 { width: 80px; } .c66 { width: 66px; } .c112 { width: 112px; } .c54 { width: 54px; } .c87 { width: 87px; }
.it { display: flex; align-items: center; gap: 3px; height: 23px; white-space: nowrap; }
.it.off { color: #b8b8b8; }
.dd { display: inline-block; width: 0; height: 0; border: 3.5px solid transparent; border-top: 4px solid #666; border-bottom: 0; margin-left: 7px; flex: none; }
.it .dd { margin-left: 3px; }
.big { display: flex; flex-direction: column; align-items: center; flex: none; }
.biglbl { line-height: 14px; }
.b1 { width: 36px; margin: 4px 7px 0 10px; }
.b1 .biglbl { margin-top: 6px; }
.b2 { width: 35px; margin-top: 1px; padding-top: 2px; }
.b2 .biglbl { margin-top: 7px; }
.offt { color: #b8b8b8; }
.b3 { width: 40px; height: 67px; margin: 1px 4px 0 5px; background: #c8d9f0; padding-top: 4px; }
.b3 .biglbl { margin-top: 7px; }
.b4 { width: 48px; margin: 5px 6px 0 0; }
.b4 .biglbl { margin-top: 6px; }
.b4 .dd { margin: 8px 0 0; }

/* option bar */
.optbar {
  display: flex; align-items: center; height: 30px; padding: 2px 0 0 3px; background: #c7cacf;
  border-bottom: 1px solid #8d9096; white-space: nowrap;
}
.sel {
  width: 100px; height: 23px; margin-right: 5px; background: #fff; border: 1px solid #b5b8bd; padding-left: 3px;
  line-height: 21px; position: relative; color: #222;
}
.sel::after { content: ""; position: absolute; right: 4px; top: 9px; border: 3px solid transparent; border-top: 4px solid #666; border-bottom: 0; }
.sel.short { width: 54px; margin: 0 0 0 18px; }
.cbx { width: 15px; height: 15px; background: #fff; border: 1px solid #888; border-radius: 2px; }
.lbl { color: #222; }
.lbl.dim { color: #797b80; }
.ml7 { margin-left: 7px; } .ml6 { margin-left: 6px; } .ml17 { margin-left: 17px; }
.gapl { margin-left: 1px; } .gapl2 { margin-left: 2px; } .gapl1 { margin-left: 2px; }
.inp { height: 23px; background: #fff; padding-left: 2px; line-height: 23px; position: relative; }
.inp.dim { color: #888; }
.w78 { width: 78px; }
.w61 { width: 61px; border: 1px solid #b5b8bd; line-height: 21px; }
.spin::before, .spin::after { content: ""; position: absolute; right: 3px; border: 3px solid transparent; }
.spin::before { top: 4px; border-bottom: 4px solid #666; border-top: 0; }
.spin::after { bottom: 4px; border-top: 4px solid #666; border-bottom: 0; }

/* workspace */
.work { display: flex; height: 841px; background: #d9dadd; }
.nav { width: 207px; flex: none; margin: 0 5px 0 0; background: #fff; border-right: 1px solid #c8c8c8; display: flex; flex-direction: column; }
.navhead { height: 21px; background: #eeeeee; border-bottom: 1px solid #ccc; padding-left: 9px; line-height: 22px; color: #777; }
.navtool { height: 29px; background: #f0f0f0; border-bottom: 1px solid #ccc; display: flex; align-items: center; gap: 4px; padding: 0 3px 0 7px; }
.plus { margin-right: auto; }
.navbtn { width: 25px; height: 24px; border: 1px solid #6eaef0; border-radius: 3px; background: #f6faff; display: flex; align-items: center; justify-content: center; }
.tree { list-style: none; margin: 0; padding: 5px 0 0; }
.tree li { height: 24px; display: flex; align-items: center; padding-left: 6px; gap: 5px; }
.fo { width: 15px; height: 12px; flex: none; }
.tree li.sub { padding-left: 41px; }
.tree li.sub span { display: flex; align-items: center; gap: 5px; width: 99px; height: 21px; padding-left: 5px; white-space: nowrap; }
.tree li.cur span { background: #c8d9f0; }

.panels { width: 286px; flex: none; display: flex; flex-direction: column; gap: 4px; }
.panel { background: #fff; border: 1px solid #c8c8c8; border-top: 0; border-bottom: 0; }
.p1 { height: 234px; border-bottom: 1px solid #c8c8c8; }
.p2 { flex: 1; position: relative; }
.phead { height: 11px; background: #d3d4d8; text-align: right; padding-right: 5px; line-height: 10px; color: #777; font-size: 13px; }
.ptabs { display: flex; height: 23px; background: #f0f0f0; border-bottom: 1px solid #ddd; }
.ptab { width: 65px; text-align: center; line-height: 24px; color: #888; background: #dcdcdc; font-weight: 700; border-right: 1px solid #ccc; }
.ptab.on { color: #333; background: #f0f0f0; }
.ptool { height: 30px; display: flex; align-items: center; background: #fff; border-bottom: 1px solid #ddd; position: relative; padding: 1px 0 0 4px; }
.pt { display: flex; align-items: center; gap: 5px; }
.t1 { width: 69px; } .t2 { width: 57px; } .t3 { width: 58px; } .t4 { width: 88px; }
.t1 .dd { margin-left: 5px; }
.more { color: #666; font-size: 8px; letter-spacing: -1px; }
.psearch { height: 19px; display: flex; align-items: center; justify-content: space-between; padding: 2px 5px 0 2px; color: #999; border-bottom: 1px solid #ccc; }
.node { height: 20px; display: flex; align-items: center; padding: 1px 0 0 13px; gap: 5px; }
.tri { width: 0; height: 0; border-left: 5px solid transparent; border-bottom: 5px solid #444; }
.leaf { padding-left: 40px; margin-top: 1px; }
.leaf span { display: block; width: 40px; height: 21px; background: #c8d9f0; line-height: 21px; padding-left: 3px; font-size: 13px; }

.propwrap { display: flex; height: 569px; }
.props { border-collapse: collapse; table-layout: fixed; width: 269px; height: 567px; }
.c-n { width: 21px; } .c-name { width: 101px; } .c-val { width: 105px; } .c-add { width: 42px; }
.props th { height: 21px; font-weight: 400; background: #f0f0f0; border: 1px solid #d6d6d6; color: #333; }
.props th.hl, .rebar th.hl { background: #7ab8f8; color: #fff; border-color: #6aa8ee; }
.props th.blank { background: #f1f4f8; }
.props td { height: 21px; padding: 0 0 0 3px; border: 1px solid #d6d6d6; white-space: nowrap; overflow: hidden; position: relative; }
.props td.n { background: #f0f0f0; text-align: center; padding: 0; color: #444; }
.props tr.act td.n { background: #7ab8f8; color: #fff; font-weight: 700; }
.lk { color: #2f6fe6; }
.props td.ro { background: #e9e9e9; color: #999; }
.props td.a { text-align: center; padding: 0 3px 0 0; }
.cb { display: inline-block; width: 14px; height: 14px; border: 1px solid #888; border-radius: 2px; background: #fff; vertical-align: top; margin-top: -1px; }
.props td.ind { padding-left: 31px; }
.props td.ind::before { content: ""; position: absolute; left: 9px; top: 0; bottom: 0; width: 1px; background: #ccc; }
.props td.ind::after { content: ""; position: absolute; left: 9px; top: 10px; width: 16px; height: 1px; background: #ccc; }
.props td.last::before { bottom: 10px; }
.props td.grp { padding-left: 2px; }
.box { display: inline-block; width: 13px; height: 13px; border: 1px solid #666; border-radius: 2px; line-height: 11px; text-align: center; margin-right: 6px; font-size: 11px; vertical-align: -2px; color: #333; }
.props td.edit { border: 2px solid #6aa8ee; }
.dots { position: absolute; right: 2px; top: 1px; width: 17px; height: 13px; border: 1px solid #8ab4e6; border-radius: 2px; background: #eef4fc; text-align: center; line-height: 10px; color: #3b6fb0; font-weight: 700; }
.vscroll { width: 15px; display: flex; flex-direction: column; align-items: center; }
.vscroll .up { margin-top: 4px; border: 4px solid transparent; border-bottom: 4px solid #222; border-top: 0; }
.vscroll b { width: 8px; height: 409px; margin-top: 143px; background: #c8c8c8; border-radius: 4px; }
.vscroll .down { margin-top: 1px; border: 4px solid transparent; border-top: 4px solid #222; border-bottom: 0; }

.split { width: 4px; flex: none; position: relative; }
.split b { position: absolute; left: 0; right: 0; top: 372px; height: 100px; background: #55585e; }

.canvas { flex: 1; position: relative; background: #000; overflow: hidden; }
.plan { display: block; }
.dialog {
  position: absolute; left: 123px; top: 186px; width: 672px; height: 360px; background: #efefef;
  display: flex; flex-direction: column; padding: 0 12px 0 12px;
}
.dtitle { margin: 0 -12px; height: 27px; background: #2e7fe0; color: #fff; display: flex; justify-content: space-between; align-items: center; padding: 0 8px; }
.dtitle b { font-size: 17px; font-weight: 400; }
.dlabel { height: 35px; line-height: 41px; font-size: 12px; color: #222; }
.dgrid {
  height: 253px; border: 1px solid #bfc3c8;
  background: linear-gradient(#f0f0f0 0, #f0f0f0 19px, transparent 19px), linear-gradient(to right, #f0f0f0 22px, #fff 22px);
}
.rebar { border-collapse: collapse; table-layout: fixed; width: 615px; }
.r0 { width: 21px; } .r1 { width: 81px; } .r2 { width: 81px; } .r3 { width: 64px; } .r4 { width: 201px; } .r5 { width: 66px; } .r6 { width: 101px; }
.rebar th { height: 19px; padding-top: 2px; font-weight: 400; background: #f0f0f0; border: 1px solid #d6d6d6; border-top: 0; color: #333; }
.rebar th.corner { background: #f1f4f8; }
.rebar td { height: 21px; padding: 1px 0 0 3px; border: 1px solid #d6d6d6; background: #fff; position: relative; }
.rebar tr.tall td { height: 26px; }
.rebar td.n { background: #f0f0f0; text-align: center; padding: 1px 0 0; color: #444; }
.rebar td.n.on { background: #7ab8f8; color: #fff; font-weight: 700; }
.rebar td.edit { border: 2px solid #6aa8ee; padding-left: 3px; }
.seltext { background: #a9c4e8; color: #555; display: inline-block; line-height: 16px; }
.caret { display: inline-block; width: 1px; height: 16px; background: #000; vertical-align: top; }
.ell { position: absolute; left: 98px; top: 2px; color: #f00; font-family: "Liberation Serif", serif; font-size: 12px; }
.bar { position: absolute; left: 18px; right: 3px; bottom: 2px; height: 2px; background: #000; }
.dbtns { display: flex; gap: 6px; margin-top: 7px; }
.spacer { flex: 1; }
.btn { width: 80px; height: 26px; border: 1px solid #c8ccd2; border-radius: 3px; background: #f7f7f7; text-align: center; line-height: 25px; color: #222; }
.btn.dis { background: #e1e1e1; color: #a8a8a8; }
.btn.pri { background: #2e7fe0; border-color: #2e7fe0; color: #fff; }
.grip { position: absolute; right: 2px; bottom: 2px; }
.cursor { position: absolute; left: 238px; top: 177px; }

/* status */
.status { display: flex; align-items: center; height: 30px; background: #dcdde0; border-top: 1px solid #c8c8c8; white-space: nowrap; color: #333; padding: 3px 0 0 3px; }
.s-xy { width: 261px; letter-spacing: .4px; }
.s-h { width: 84px; } .s-e { width: 134px; } .s-z { width: 103px; } .s-hide { width: 102px; }
.sb { height: 24px; display: flex; align-items: center; justify-content: center; background: #c8cacd; border: 1px solid #9ea0a4; margin-right: 4px; flex: none; }
.sb .dd { margin-left: 3px; border-width: 2.500px; border-top-width: 3px; }
.sb.act { background: #fff; border-color: #4a90e2; }
.w24 { width: 24px; } .w25 { width: 25px; } .w35 { width: 35px; } .w73 { width: 73px; } .w58 { width: 58px; }
.s-msg { margin-left: 4px; }
.taskbar { height: 9px; position: relative; background: linear-gradient(#2f83ad, #1d6b97); overflow: hidden; border-top: 1px solid #fff; }
.orb { position: absolute; left: 11px; top: 1px; width: 26px; height: 26px; border-radius: 50%; background: #bcd8ee; }
.tb1 { position: absolute; left: 122px; top: 0; width: 159px; height: 9px; background: #9fc6d8; border: 1px solid #fff; border-radius: 2px 2px 0 0; }
.tb2 { position: absolute; left: 298px; top: 1px; width: 32px; height: 20px; background: #fff; border-radius: 8px; }
.tb3 { position: absolute; left: 346px; top: 0; width: 159px; height: 9px; background: #d7e6ef; border: 1px solid #fff; border-radius: 2px 2px 0 0; }

/* hand-drawn annotation */
.ink { position: absolute; left: 0; top: 0; pointer-events: none; }
.ink path { fill: none; stroke: #f80000; stroke-width: 4.5; stroke-linejoin: round; stroke-linecap: round; }
```
